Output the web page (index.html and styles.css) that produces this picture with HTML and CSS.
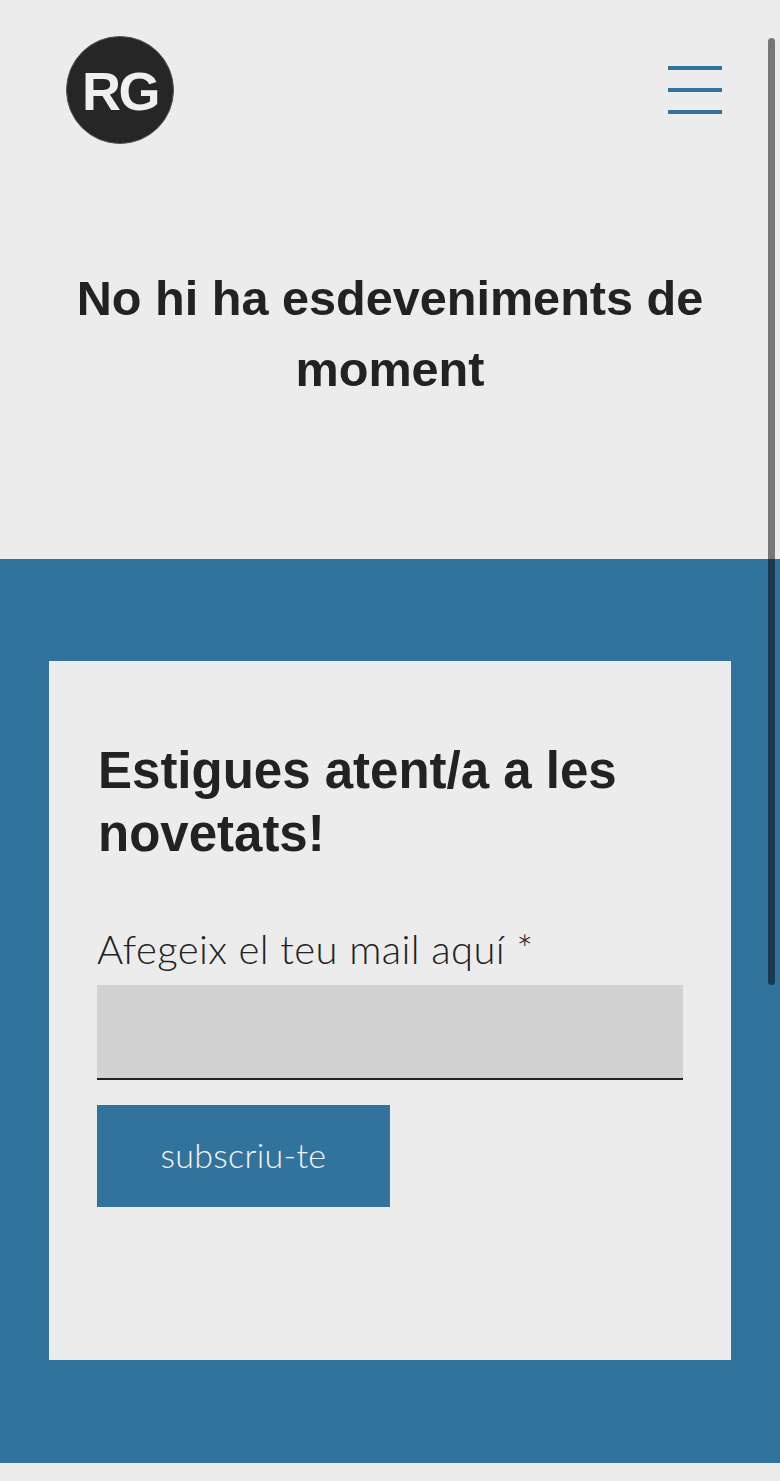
FILE: index.html
```html
<!DOCTYPE html>
<html lang="ca">
<head>
<meta charset="utf-8">
<title>Esdeveniments</title>
<link rel="stylesheet" href="styles.css">
</head>
<body>
<header class="header">
  <div class="logo"><span class="logo-text">RG</span></div>
  <button class="menu" type="button" aria-label="Menú">
    <span class="menu-bar"></span>
    <span class="menu-bar"></span>
    <span class="menu-bar"></span>
  </button>
</header>
<main>
  <section class="events">
    <h1 class="events-title">No hi ha esdeveniments de moment</h1>
  </section>
  <section class="newsletter">
    <form class="card">
      <h2 class="card-title">Estigues atent/a a les novetats!</h2>
      <label class="label" for="mail">Afegeix el teu mail aquí *</label>
      <input class="input" id="mail" type="email">
      <button class="submit" type="button">subscriu-te</button>
    </form>
  </section>
</main>
<div class="scrollbar"></div>
</body>
</html>
```
FILE: styles.css
```css
* { box-sizing: border-box; }
html, body { margin: 0; padding: 0; }
body {
  width: 780px;
  height: 1481px;
  overflow: hidden;
  background: #ececec;
  color: #222;
  font-family: "Liberation Sans", Arial, sans-serif;
  position: relative;
}
.header {
  height: 180px;
  padding: 36px 58px 0 66px;
  display: flex;
  justify-content: space-between;
  align-items: flex-start;
}
.logo {
  width: 108px;
  height: 108px;
  border-radius: 50%;
  background: #262626;
  border: 1px solid #555;
  display: flex;
  align-items: center;
  justify-content: center;
}
.logo-text {
  color: #efefef;
  font-weight: 700;
  font-size: 54px;
  line-height: 1;
  letter-spacing: -2.5px;
  padding-top: 2px;
}
.menu {
  width: 54px;
  margin-top: 30px;
  padding: 0;
  border: 0;
  background: none;
  display: flex;
  flex-direction: column;
  gap: 18px;
}
.menu-bar {
  display: block;
  height: 4px;
  background: #32739d;
}
.events {
  height: 379px;
  padding: 83px 60px 0;
}
.events-title {
  margin: 0;
  text-align: center;
  font-size: 48.6px;
  line-height: 71px;
  font-weight: 700;
}
.newsletter {
  height: 904px;
  padding: 102px 49px 0;
  background: #32739d;
}
.card {
  height: 699px;
  padding: 78px 48px 0;
  background: #ececec;
  display: flex;
  flex-direction: column;
  align-items: flex-start;
}
.card-title {
  margin: 0 0 59px;
  font-size: 51px;
  line-height: 63px;
  font-weight: 700;
  padding-left: 1px;
}
.label {
  font-family: Lato, sans-serif;
  font-weight: 300;
  font-size: 40px;
  line-height: 50px;
  letter-spacing: 0.38px;
  margin-bottom: 11px;
}
.input {
  width: 100%;
  height: 95px;
  padding: 0;
  border: 0;
  border-bottom: 2px solid #222;
  border-radius: 0;
  background: #d2d2d2;
  margin-bottom: 25px;
}
.submit {
  width: 293px;
  height: 102px;
  padding: 0 0 3px;
  border: 0;
  background: #32739d;
  color: #f4f4f4;
  font-family: Lato, sans-serif;
  font-weight: 300;
  font-size: 34px;
  letter-spacing: 0.3px;
}
.scrollbar {
  position: absolute;
  top: 38px;
  left: 768px;
  width: 7px;
  height: 947px;
  border-radius: 4px;
  background: rgba(0, 0, 0, 0.5);
}
```
